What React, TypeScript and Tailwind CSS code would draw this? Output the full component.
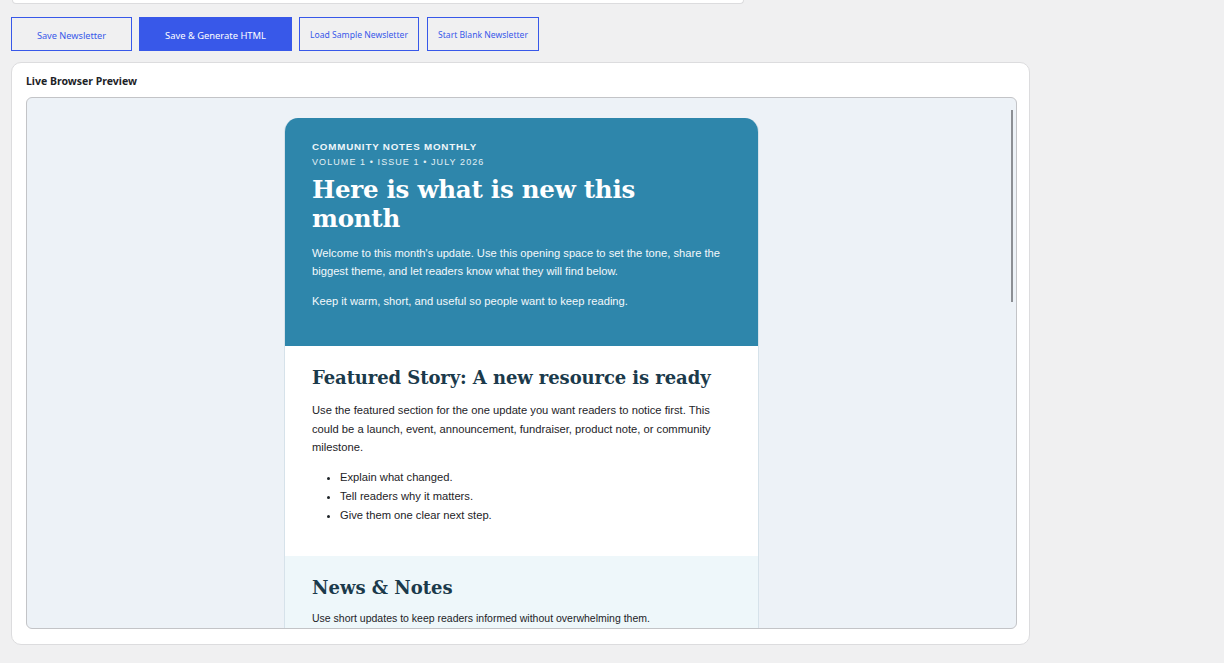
import React from "react";

export default function App() {
  return (
    <div className="min-h-screen w-full bg-[#f0f0f1] font-['Noto_Sans',sans-serif]">
      <div className="ml-[11px] w-[1019px]">
        <div className="ml-[1px] h-[4px] w-[732px] rounded-b-[8px] border-x border-b border-[#dcdcde] bg-white" />
        <div className="mt-[13px] flex gap-[7px]">
          <button className="h-[34px] w-[121px] border border-[#3858e9] bg-transparent pt-[4px] text-[9.2px] text-[#3858e9]">
            Save Newsletter
          </button>
          <button className="h-[34px] w-[153px] border border-[#3858e9] bg-[#3858e9] pt-[4px] text-[9.4px] text-white">
            Save &amp; Generate HTML
          </button>
          <button className="h-[34px] w-[120px] border border-[#3858e9] bg-transparent pt-[2px] text-[8.6px] text-[#3858e9]">
            Load Sample Newsletter
          </button>
          <button className="ml-[1px] h-[34px] w-[112px] border border-[#3858e9] bg-transparent pt-[2px] text-[8.6px] text-[#3858e9]">
            Start Blank Newsletter
          </button>
        </div>
        <div className="mt-[11px] flex h-[583px] w-[1019px] flex-col rounded-[10px] border border-[#dcdcde] bg-white pb-[15px] pl-[14px] pr-[12px] pt-[10px]">
          <h2 className="text-[10.5px] font-bold leading-[16px] text-[#1d2327]">Live Browser Preview</h2>
          <div className="relative mt-[8px] flex-1 overflow-hidden rounded-[6px] border border-[#c3c4c7] bg-[#edf2f7]">
            <div className="absolute right-[3px] top-[12px] h-[192px] w-[2px] bg-[#8c8f94]" />
            <div className="mx-auto mt-[20px] w-[475px] overflow-hidden rounded-t-[14px] border-x border-[#d6e2ea] font-['Liberation_Sans',Arial,sans-serif]">
              <div className="bg-[#2e86ab] px-[27px] pb-[36px] pt-[22px] text-white">
                <div className="text-[9.8px] font-bold uppercase leading-[13px] tracking-[0.08em] text-[#eef6fa]">
                  Community Notes Monthly
                </div>
                <div className="mt-[3px] text-[9px] uppercase leading-[13px] tracking-[0.12em] text-[#e3f0f5]">
                  Volume 1 • Issue 1 • July 2026
                </div>
                <h1 className="mt-[6px] font-['DejaVu_Serif',serif] text-[24.5px] font-bold leading-[29px] tracking-[-0.01em] text-white">
                  Here is what is new this month
                </h1>
                <p className="mt-[11px] text-[11.2px] leading-[18px] text-[#f3f8fb]">
                  Welcome to this month's update. Use this opening space to set the tone, share the biggest theme, and let
                  readers know what they will find below.
                </p>
                <p className="mt-[12px] text-[11.2px] leading-[18px] text-[#f3f8fb]">
                  Keep it warm, short, and useful so people want to keep reading.
                </p>
              </div>
              <div className="bg-white px-[27px] pb-[31px] pt-[19px] text-[#1d2327]">
                <h2 className="font-['DejaVu_Serif',serif] text-[18px] font-bold leading-[26px] tracking-[-0.005em] text-[#1b3a4b]">
                  Featured Story: A new resource is ready
                </h2>
                <p className="mt-[10px] text-[11.2px] leading-[18.5px]">
                  Use the featured section for the one update you want readers to notice first. This could be a launch, event,
                  announcement, fundraiser, product note, or community milestone.
                </p>
                <ul className="mt-[11px] list-disc pl-[28px] text-[11.2px] leading-[19px]">
                  <li>Explain what changed.</li>
                  <li>Tell readers why it matters.</li>
                  <li>Give them one clear next step.</li>
                </ul>
              </div>
              <div className="bg-[#eef7fa] px-[27px] pb-[30px] pt-[19px] text-[#1d2327]">
                <h2 className="font-['DejaVu_Serif',serif] text-[18px] font-bold leading-[26px] text-[#1b3a4b]">
                  News &amp; Notes
                </h2>
                <p className="mt-[9px] text-[10.5px] leading-[16px]">
                  Use short updates to keep readers informed without overwhelming them.
                </p>
              </div>
            </div>
          </div>
        </div>
      </div>
    </div>
  );
}
